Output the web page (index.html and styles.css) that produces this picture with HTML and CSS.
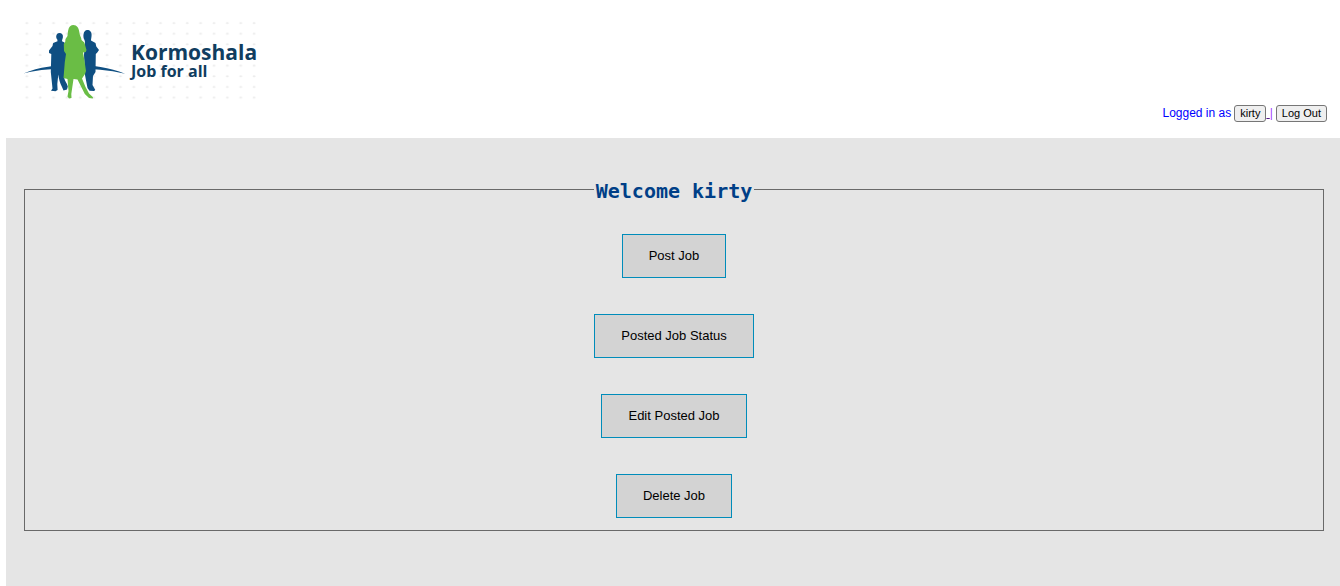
FILE: index.html
```html
<!DOCTYPE html>
<html lang="en">
<head>
<meta charset="utf-8">
<title>Kormoshala</title>
<link rel="stylesheet" href="styles.css">
</head>
<body>
<header class="header">
  <svg class="logo" viewBox="22 20 240 82" role="img" aria-label="Kormoshala, Job for all">
    <defs>
      <pattern id="dots" x="20" y="18" width="13.37" height="10.65" patternUnits="userSpaceOnUse">
        <ellipse cx="6.8" cy="5" rx="1.5" ry="1" fill="#ececec"/>
      </pattern>
    </defs>
    <rect x="22" y="20" width="236" height="81" fill="url(#dots)"/>
    <path fill="#0f4f82" d="M23.5 73.500C39 67 57 64.800 74 64.800C92 64.800 110 67.500 125 73.800C109 70 92 68.600 74 68.600C56 68.600 39 69.500 23.500 73.500Z"/>
    <path fill="#0f4f82" d="M59.300 33C62 33 63.300 35 62.900 37.200C62.700 38.800 62 39.800 62 41.200L64.500 42.500L66 48V65L64 77C64.500 81 67 83 67.800 86.500L67 89.500L63.500 90.500L62 87C60 83 58.800 79 58.300 74.500L57.300 84L57.600 90L55.500 91.200L51 90.800L52.500 88.500L50.800 72L51.300 54L49 53L49 50.500L52.500 46L53.200 43L57.500 41.300L57.300 39.500C55.500 38 55.800 33 59.300 33Z"/>
    <path fill="#0f4f82" d="M87.200 30C90 30 91.800 32 91.600 35C91.500 37.500 91 39 91 40.500L95.500 43L96.300 46.500L99 50L97.300 52.500L95.800 54L95.500 72L93 76L92.500 85L95.300 90L94 91L89.500 90.800L87.500 88L85 75L84 55L85 42L84.500 40C82.500 37 83.200 30 87.200 30Z"/>
    <path fill="#6abd45" d="M73.300 25C77 25 78.800 28 79.300 32C79.700 36 81.400 37 81.500 40L84.300 42.500L86.500 50L85.800 52L83 52.500L84.500 61L86 71L85 74L82 78.500L85.500 87L89 93.500L93 97.300L92.800 98.500L89 98L84.800 94L77.500 79.500L73.500 79L71.300 94L71.500 98L69 98.500L67.500 96.500L68.500 91L67.500 79L63.500 78L64.800 62L66 54L64 51L63.800 44L65.200 42L65.500 39L67.500 36C68 30 68.500 25 73.300 25Z"/>
    <text class="logo-name" x="131" y="60">Kormoshala</text>
    <text class="logo-tagline" x="131" y="77">Job for all</text>
  </svg>
  <div class="session">
    <span>Logged in as</span>
    <span class="account"><button class="small-button" type="button">kirty</button><a class="profile-link" href="#">&nbsp;</a><span class="divider">|</span></span>
    <button class="small-button" type="button">Log Out</button>
  </div>
</header>
<main class="content">
  <fieldset class="panel">
    <legend class="welcome">Welcome kirty</legend>
    <div class="actions">
      <button class="action" type="button">Post Job</button>
      <button class="action" type="button">Posted Job Status</button>
      <button class="action" type="button">Edit Posted Job</button>
      <button class="action" type="button">Delete Job</button>
    </div>
  </fieldset>
</main>
</body>
</html>
```
FILE: styles.css
```css
* {
  box-sizing: border-box;
}

body {
  margin: 0;
  padding-left: 6px;
  min-height: 100vh;
  display: flex;
  flex-direction: column;
  background: #fff;
  font-family: "Liberation Sans", Arial, sans-serif;
  font-size: 12px;
}

.header {
  display: flex;
  flex-direction: column;
  padding: 20px 13px 16px 16px;
}

.logo {
  width: 240px;
  height: 82px;
}

.logo-name,
.logo-tagline {
  font-family: "Open Sans", sans-serif;
  font-weight: 700;
  fill: #103d60;
}

.logo-name {
  font-size: 21px;
}

.logo-tagline {
  font-size: 16px;
}

.session {
  display: flex;
  align-items: baseline;
  align-self: flex-end;
  gap: 3px;
  margin-top: 3px;
  line-height: 14px;
  color: #00f;
}

.account {
  display: flex;
  align-items: baseline;
}

.small-button {
  padding: 1px 5px;
  border: 1px solid #767676;
  border-radius: 3px;
  background: #efefef;
  color: #000;
  font-family: inherit;
  font-size: 11px;
  line-height: 13px;
}

.profile-link {
  color: #551a8b;
}

.divider {
  color: #a040ff;
}

.content {
  flex: 1;
  padding: 39px 16px 55px 18px;
  background: #e5e5e5;
}

.panel {
  margin: 0;
  padding: 0 12px 12px;
  border: 1px solid #696969;
}

.welcome {
  margin: 0 auto;
  padding: 4px 2px 0;
  color: #003f87;
  font-family: Consolas, "DejaVu Sans Mono", monospace;
  font-size: 20px;
  font-weight: bold;
  line-height: 20px;
}

.actions {
  display: flex;
  flex-direction: column;
  align-items: center;
  gap: 36px;
  padding-top: 33px;
}

.action {
  padding: 13px 26px;
  border: 1px solid #008cba;
  background: #d3d3d3;
  color: #000;
  font-family: inherit;
  font-size: 13px;
  line-height: 16px;
}
```
